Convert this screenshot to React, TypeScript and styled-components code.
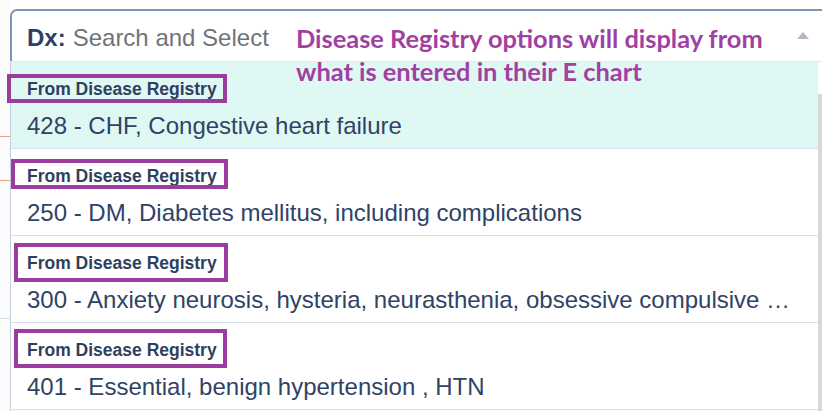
import React from "react";
import styled, { createGlobalStyle } from "styled-components";

const Global = createGlobalStyle`
  html, body { margin: 0; padding: 0; background: #ffffff; }
  body { font-family: "Liberation Sans", Arial, sans-serif; }
`;

const Page = styled.div`
  position: relative;
  width: 822px;
  height: 411px;
  overflow: hidden;
  display: flex;
  background: #ffffff;
`;

const Gutter = styled.div`
  width: 10px;
  flex: none;
  background:
    linear-gradient(#e8a090, #e8a090) 0 136px / 100% 1px no-repeat,
    linear-gradient(#e8a090, #e8a090) 0 180px / 100% 1px no-repeat,
    linear-gradient(#d8dde4, #d8dde4) 0 318px / 100% 1px no-repeat,
    #fbfbfb;
`;

const Combo = styled.div`
  flex: 1;
  display: flex;
  flex-direction: column;
  padding-top: 9px;
`;

const InputBar = styled.div`
  position: relative;
  height: 52px;
  flex: none;
  display: flex;
  align-items: center;
  gap: 7px;
  padding: 4px 0 0 15px;
  border-top: 2px solid #8094b4;
  border-left: 2px solid #8094b4;
  border-top-left-radius: 7px;
  font-size: 24px;
  box-sizing: border-box;
`;

const Prefix = styled.span`
  font-weight: bold;
  color: #2c4066;
`;

const Placeholder = styled.span`
  color: #707479;
`;

const Caret = styled.svg`
  position: absolute;
  right: 12px;
  top: 19px;
`;

const ListArea = styled.div`
  flex: 1;
  display: flex;
  border-top: 1px solid #e3e8ef;
`;

const List = styled.div`
  flex: 1;
  display: flex;
  flex-direction: column;
  border-left: 1px solid #c3cfe0;
`;

const Scrollbar = styled.div`
  width: 4px;
  flex: none;
  background: linear-gradient(#ffffff, #ffffff) 0 0 / 100% 32px no-repeat, #d6d8dc;
`;

const Option = styled.div<{ $active?: boolean }>`
  height: 87px;
  flex: none;
  box-sizing: border-box;
  background: ${(p) => (p.$active ? "#e0f8f4" : "#ffffff")};
  border-bottom: 1px solid #d7dfeb;
  display: flex;
  flex-direction: column;
  padding: 17px 0 0 16px;
  color: #2f4366;
`;

type Box = { t: number; b: number; l: number; r: number };

const Tag = styled.span<{ $box: Box }>`
  position: relative;
  align-self: flex-start;
  font-size: 17.5px;
  font-weight: bold;
  line-height: 20px;
  color: #2f3f5e;
  &::after {
    content: "";
    position: absolute;
    top: ${(p) => -p.$box.t}px;
    bottom: ${(p) => -p.$box.b}px;
    left: ${(p) => -p.$box.l}px;
    right: ${(p) => -p.$box.r}px;
    border: 4px solid #9a3d9e;
  }
`;

const Label = styled.div`
  margin-top: 13px;
  font-size: 24px;
  line-height: 28px;
  white-space: nowrap;
`;

const Note = styled.div`
  position: absolute;
  left: 296px;
  top: 22px;
  font-family: Lato, "Open Sans", sans-serif;
  font-weight: bold;
  font-size: 25.4px;
  line-height: 33px;
  color: #a23fa2;
`;

const options: { text: string; box: Box }[] = [
  { text: "428 - CHF, Congestive heart failure", box: { t: 5, b: 4, l: 20, r: 10 } },
  { text: "250 - DM, Diabetes mellitus, including complications", box: { t: 7, b: 3, l: 16, r: 11 } },
  {
    text: "300 - Anxiety neurosis, hysteria, neurasthenia, obsessive compulsive …",
    box: { t: 10, b: 9, l: 13, r: 11 },
  },
  { text: "401 - Essential, benign hypertension , HTN", box: { t: 11, b: 8, l: 13, r: 10 } },
];

export default function App() {
  return (
    <Page>
      <Global />
      <Gutter />
      <Combo>
        <InputBar>
          <Prefix>Dx:</Prefix>
          <Placeholder>Search and Select</Placeholder>
          <Caret width="14" height="10" viewBox="0 0 14 10">
            <path d="M1 9 L7 2 L13 9 Z" fill="#b2b9c4" />
          </Caret>
        </InputBar>
        <ListArea>
          <List>
            {options.map((o, i) => (
              <Option key={o.text} $active={i === 0}>
                <Tag $box={o.box}>From Disease Registry</Tag>
                <Label>{o.text}</Label>
              </Option>
            ))}
          </List>
          <Scrollbar />
        </ListArea>
      </Combo>
      <Note>
        Disease Registry options will display from
        <br />
        what is entered in their E chart
      </Note>
    </Page>
  );
}
